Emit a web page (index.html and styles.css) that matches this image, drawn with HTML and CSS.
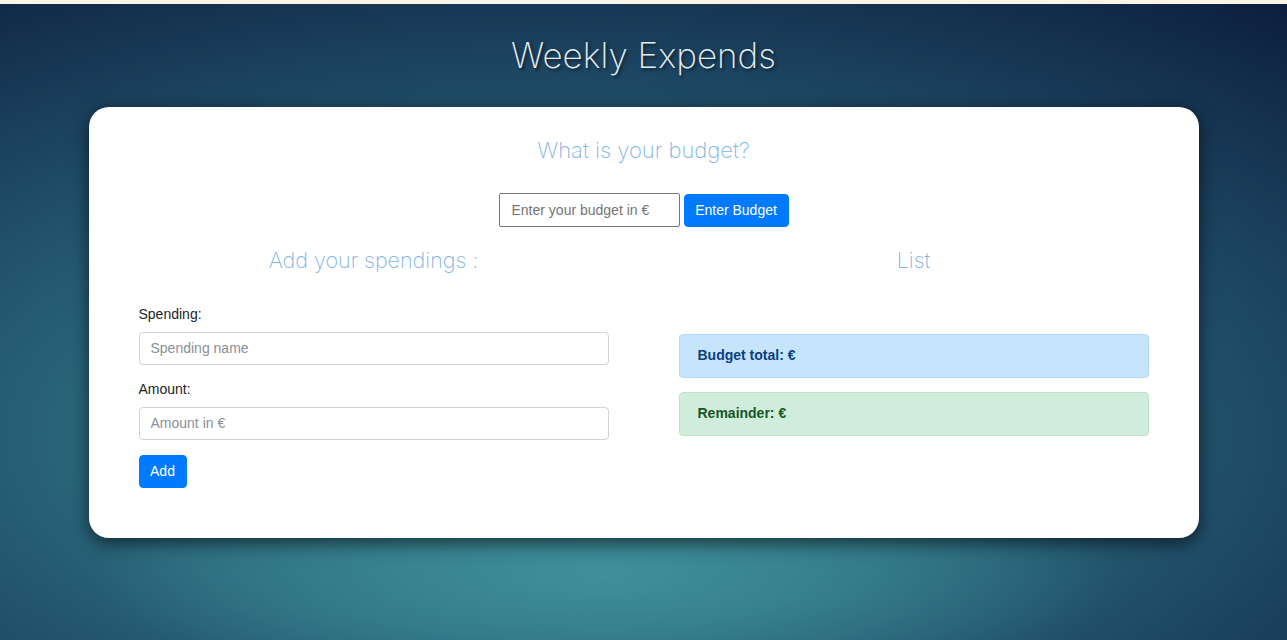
FILE: index.html
```html
<!DOCTYPE html>
<html lang="en">
<head>
<meta charset="utf-8">
<title>Weekly Expends</title>
<link rel="stylesheet" href="styles.css">
</head>
<body>
<div class="topbar"></div>
<h1 class="title">Weekly Expends</h1>
<main class="card">
  <h2 class="question">What is your budget?</h2>
  <form class="budget-form">
    <input class="budget-input" type="text" placeholder="Enter your budget in €">
    <button class="btn btn-budget" type="button">Enter Budget</button>
  </form>
  <div class="columns">
    <section class="col">
      <h2 class="col-title">Add your spendings :</h2>
      <div class="group">
        <label class="label">Spending:</label>
        <input class="field" type="text" placeholder="Spending name">
      </div>
      <div class="group">
        <label class="label">Amount:</label>
        <input class="field" type="text" placeholder="Amount in €">
      </div>
      <button class="btn btn-add" type="button">Add</button>
    </section>
    <section class="col">
      <h2 class="col-title list-title">List</h2>
      <div class="alert alert-primary">Budget total: €</div>
      <div class="alert alert-success">Remainder: €</div>
    </section>
  </div>
</main>
</body>
</html>
```

FILE: styles.css
```css
* { box-sizing: border-box; }
html, body { margin: 0; padding: 0; }
body {
  min-height: 100vh;
  font-family: "Liberation Sans", Arial, sans-serif;
  font-size: 14px;
  color: #212529;
  background:
    radial-gradient(ellipse 40% 20% at 47% 90%, rgba(66,150,160,0.85), rgba(66,150,160,0)),
    radial-gradient(ellipse 95% 90% at 42% 68%, #347a8b 0%, #2b697d 35%, #1d4763 62%, #0b1a3a 100%);
}
.topbar {
  height: 4px;
  background: #fdf3e6;
}
.title {
  margin: 29px 0 30px;
  text-align: center;
  font-family: Inter, Lato, sans-serif;
  font-weight: 200;
  font-size: 35px;
  line-height: 44px;
  color: #e3ecf0;
  text-shadow: 2px 2px 3px rgba(0,0,0,0.55);
}
.card {
  width: 1110px;
  margin: 0 auto;
  background: #fff;
  border-radius: 20px;
  padding: 28px 50px 50px;
  box-shadow: 0 5px 18px rgba(0,0,0,0.6);
}
.question, .col-title {
  margin: 0;
  text-align: center;
  font-family: Inter, Lato, sans-serif;
  font-weight: 200;
  font-size: 22px;
  line-height: 30px;
  color: #7fb4e6;
}
.col-title { font-size: 21.5px; }
.budget-form {
  margin-top: 28px;
  display: flex;
  justify-content: center;
  align-items: center;
  gap: 4px;
}
.budget-input {
  width: 181px;
  height: 34px;
  border: 1px solid #767676;
  border-radius: 2px;
  padding: 0 12px;
  font: 14px "Liberation Sans", Arial, sans-serif;
  color: #495057;
}
.budget-input::placeholder { color: #757575; }
.btn {
  height: 33px;
  border: 1px solid #007bff;
  border-radius: 4px;
  background: #007bff;
  color: #fff;
  font: 14px "Liberation Sans", Arial, sans-serif;
}
.btn-budget { width: 105px; padding: 0 0 1px; }
.btn-add { width: 48px; padding: 0 0 2px; margin-top: 1px; }
.columns {
  margin-top: 18px;
  display: grid;
  grid-template-columns: 470px 470px;
  column-gap: 70px;
}
.col {
  display: flex;
  flex-direction: column;
  align-items: flex-start;
}
.col-title { align-self: stretch; margin-bottom: 29px; }
.list-title { margin-bottom: 59px; }
.group {
  align-self: stretch;
  display: flex;
  flex-direction: column;
  gap: 8px;
  margin-bottom: 14px;
}
.label {
  line-height: 20px;
  font-size: 14px;
  color: #212529;
}
.field {
  width: 100%;
  height: 33px;
  border: 1px solid #ced4da;
  border-radius: 4px;
  padding: 0 11px 2px;
  font: 14px "Liberation Sans", Arial, sans-serif;
  color: #495057;
}
.field::placeholder { color: #8a9097; }
.alert {
  align-self: stretch;
  height: 44px;
  line-height: 40px;
  padding: 0 18px;
  border: 1px solid;
  border-radius: 4px;
  font-weight: bold;
  font-size: 14px;
  margin-bottom: 14px;
}
.alert-primary { background: #c6e5fd; border-color: #b1d9fb; color: #0b3f7d; }
.alert-success { background: #d0eddb; border-color: #bde3c8; color: #155724; }
```
